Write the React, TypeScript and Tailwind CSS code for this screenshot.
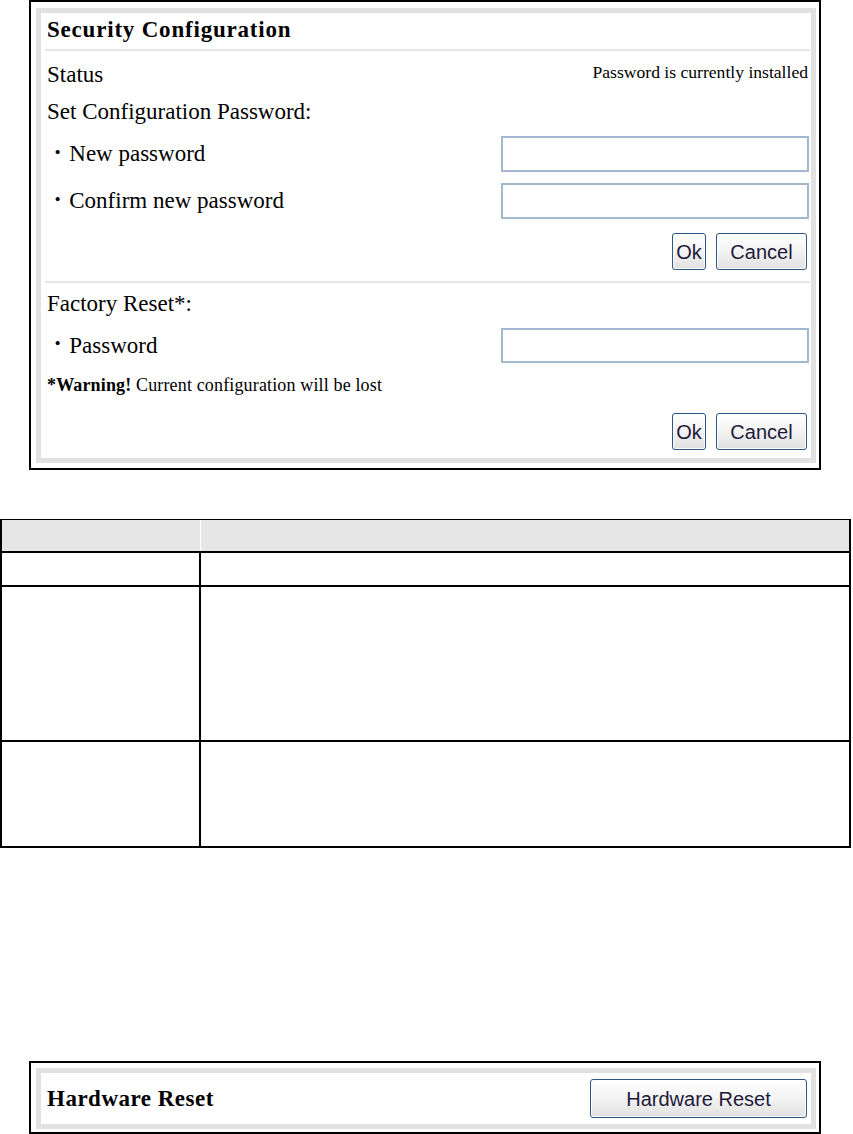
import React from "react";

const serif = "font-['Liberation_Serif','Times_New_Roman',serif]";
const sans = "font-['Liberation_Sans',Arial,sans-serif]";

function Btn({ label, w, h }: { label: string; w: string; h: string }) {
  return (
    <button
      type="button"
      className={`${w} ${h} ${sans} flex items-center justify-center rounded-[3px] border-[1.5px] border-[#2c5684] bg-linear-to-b from-white via-[#f3f3f3] to-[#e0e0e0] text-[20px] leading-none text-[#1e1a3a] shadow-[inset_0_0_0_1px_#ffffff]`}
    >
      {label}
    </button>
  );
}

function Field({ h }: { h: string }) {
  return <div className={`w-[308px] ${h} border-2 border-[#a3b8d1] bg-white`} />;
}

function BulletRow({ label, h }: { label: string; h: string }) {
  return (
    <div className="flex items-center justify-between">
      <div className="flex items-center pl-[8px]">
        <span className="-translate-y-[2px] text-[15px] font-bold leading-none">•</span>
        <span className="ml-[9px] text-[23px] leading-[26px]">{label}</span>
      </div>
      <Field h={h} />
    </div>
  );
}

export default function App() {
  return (
    <div className={`relative flex h-[1134px] w-[853px] flex-col bg-white text-black ${serif}`}>
      {/* Security Configuration box */}
      <div className="ml-[29px] h-[470px] w-[792px] border-2 border-black">
        <div className="ml-[5px] mt-[6px] h-[455px] w-[780px] border-[5px] border-[#e1e1e1] pl-[6px] pr-[2px]">
          <div className="h-[34px] text-[23px] font-bold leading-[34px] tracking-[0.8px]">
            Security Configuration
          </div>
          <div className="-ml-[2px] -mr-[1px] mt-[2px] h-[2px] bg-[#e6e6e6]" />
          <div className="flex h-[48px] items-start justify-between">
            <span className="text-[23px] leading-[48px]">Status</span>
            <span className="mr-[1px] mt-[11px] text-[17.6px] leading-[20px]">
              Password is currently installed
            </span>
          </div>
          <div className="h-[26px] text-[23px] leading-[26px]">Set Configuration Password:</div>
          <div className="mt-[11px]">
            <BulletRow label="New password" h="h-[36px]" />
          </div>
          <div className="mt-[11px]">
            <BulletRow label="Confirm new password" h="h-[36px]" />
          </div>
          <div className="mr-[2px] mt-[14px] flex justify-end gap-[10px]">
            <Btn label="Ok" w="w-[34px]" h="h-[37px]" />
            <Btn label="Cancel" w="w-[91px]" h="h-[37px]" />
          </div>
          <div className="-ml-[2px] -mr-[1px] mt-[11px] h-[2px] bg-[#e6e6e6]" />
          <div className="h-[42px] text-[23px] leading-[42px]">Factory Reset*:</div>
          <div className="mt-[3px]">
            <BulletRow label="Password" h="h-[35px]" />
          </div>
          <div className="mt-[12px] h-[20px] text-[18px] leading-[20px] tracking-[0.15px]">
            <span className="font-bold">*Warning!</span> Current configuration will be lost
          </div>
          <div className="mr-[2px] mt-[18px] flex justify-end gap-[10px]">
            <Btn label="Ok" w="w-[34px]" h="h-[37px]" />
            <Btn label="Cancel" w="w-[91px]" h="h-[37px]" />
          </div>
        </div>
      </div>

      {/* Table */}
      <div className="mt-[49px] w-[851px] border-l-2 border-r-2 border-t border-black">
        <div className="flex h-[33px] border-b-2 border-black bg-[#e6e6e6]">
          <div className="w-[199px] border-r border-white" />
          <div className="flex-1" />
        </div>
        <div className="flex h-[34px] border-b-2 border-black">
          <div className="w-[199px] border-r-2 border-black" />
          <div className="flex-1" />
        </div>
        <div className="flex h-[155px] border-b-2 border-black">
          <div className="w-[199px] border-r-2 border-black" />
          <div className="flex-1" />
        </div>
        <div className="flex h-[106px] border-b-2 border-black">
          <div className="w-[199px] border-r-2 border-black" />
          <div className="flex-1" />
        </div>
      </div>

      {/* Hardware Reset box */}
      <div className="ml-[29px] mt-[213px] h-[73px] w-[792px] border-2 border-black">
        <div className="ml-[5px] mt-[5px] flex h-[61px] w-[780px] items-center justify-between border-[5px] border-[#e1e1e1] pl-[6px] pr-[4px]">
          <span className="text-[23px] font-bold leading-[26px] tracking-[0.5px]">Hardware Reset</span>
          <Btn label="Hardware Reset" w="w-[217px]" h="h-[39px]" />
        </div>
      </div>
    </div>
  );
}
